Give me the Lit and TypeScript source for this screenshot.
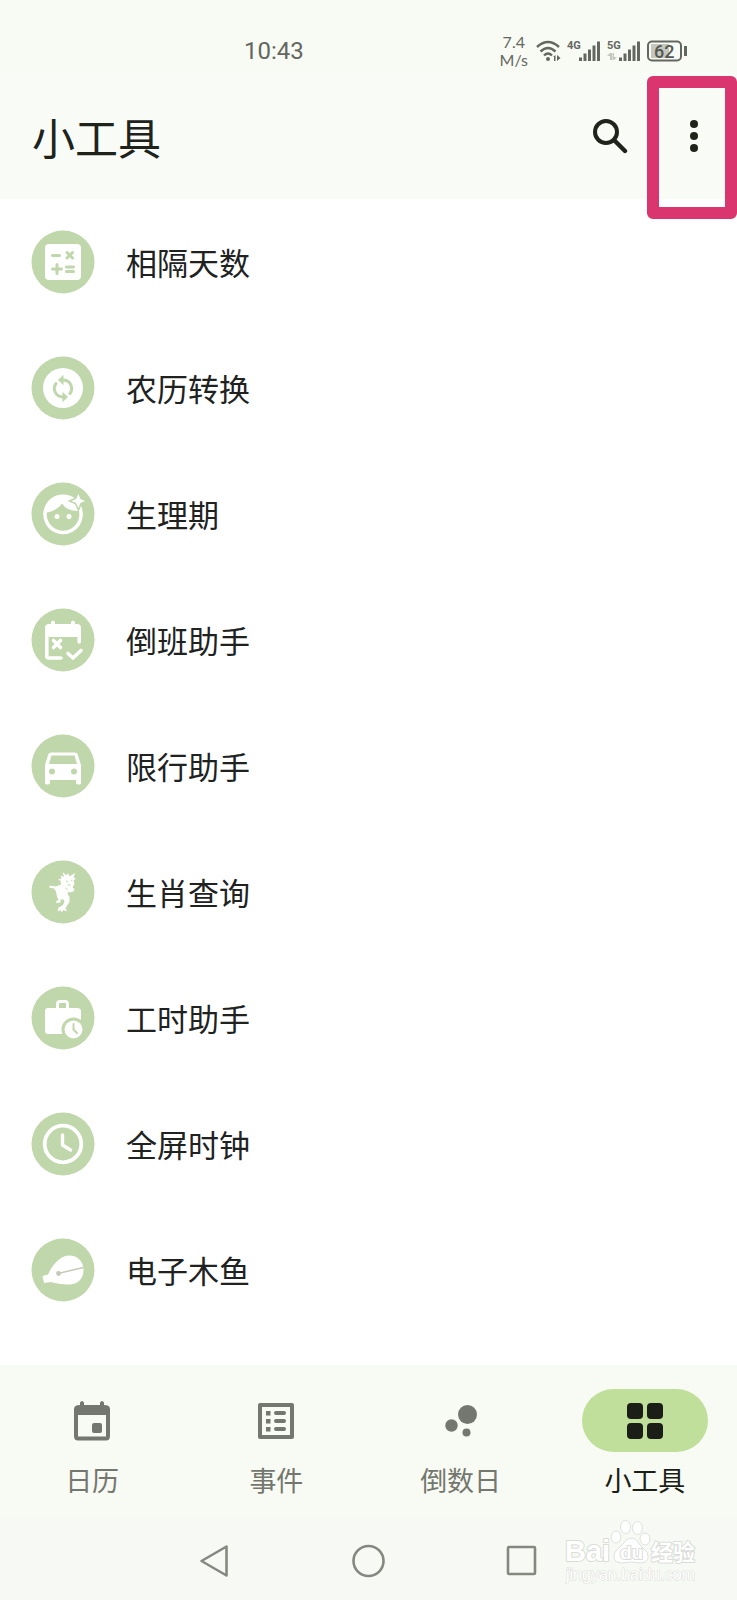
import { LitElement, html, svg, css } from "lit";
import { customElement, state } from "lit/decorators.js";

const tools = [
  {
    name: "相隔天数",
    art: svg`
      <rect x="14" y="14" width="36" height="36" rx="4" fill="#fff"/>
      <path class="cut" d="M21.500 25.500H28.500M21.500 39H30.500M26 34.500V43.500M36 22.500L41.500 28M41.500 22.500L36 28M35.500 37H42.500M35.500 41.500H42.500"/>`,
  },
  {
    name: "农历转换",
    art: svg`
      <circle cx="32" cy="32" r="20" fill="#fff"/>
      <path class="cut" d="M32 24A8.500 8.500 0 0 1 39 37.500M32 41A8.500 8.500 0 0 1 25 27.500"/>
      <path fill="#bfd7ab" d="M32.500 18.800L27 24L32.500 29.200ZM31.500 35.800L37 41L31.500 46.200Z"/>`,
  },
  {
    name: "生理期",
    art: svg`
      <path fill="none" stroke="#fff" stroke-width="3.500" d="M44.500 19.500A18 18 0 1 1 32 14.500"/>
      <path fill="#fff" d="M13 31C13 20 22 12.500 32 12.500C37 12.500 41 14 44 16.500L50 28L47 29C39 29 34 26 31 21.500C28 26 22 30 13 31Z"/>
      <path fill="#fff" stroke="#bfd7ab" stroke-width="1.600" d="M47.500 10L50 16.500L56 19L50 21.500L47.500 28L44.500 21.500L38.500 19L44.500 16.500Z"/>
      <circle cx="26" cy="34.500" r="2.500" fill="#fff"/><circle cx="38" cy="34.500" r="2.500" fill="#fff"/>`,
  },
  {
    name: "倒班助手",
    art: svg`
      <path fill="#fff" d="M14 29V19.500Q14 16 18 16H20V14Q22 11 24 14V16H40V14Q42 11 44 14V16H46Q50 16 50 19.500V29Z"/>
      <path fill="none" stroke="#fff" stroke-width="3.600" stroke-linecap="round" d="M15.800 26V48.500Q15.800 50 18 50H30M48.200 26V34"/>
      <path fill="none" stroke="#fff" stroke-width="3.600" stroke-linecap="round" stroke-linejoin="round" d="M22.500 32.500L29.500 39.500M29.500 32.500L22.500 39.500M37 45.500L42 50L50 42.500"/>`,
  },
  {
    name: "限行助手",
    art: svg`
      <path fill="#fff" fill-rule="evenodd" d="M20 18.500H44Q46 18.500 46.600 20L50 31V49Q50 50.500 48 50.500H47Q45 50.500 45 48.500V46H19V48.500Q19 50.500 17 50.500H16Q14 50.500 14 49V31L17.400 20Q18 18.500 20 18.500ZM20.500 21.500L18 30H46L43.500 21.500ZM21 34.500A3 3 0 1 0 21 40.500A3 3 0 1 0 21 34.500ZM43 34.500A3 3 0 1 0 43 40.500A3 3 0 1 0 43 34.500Z"/>`,
  },
  {
    name: "生肖查询",
    art: svg`
      <path fill="#fff" d="M31.500 12L35 15L37.500 13.500L38.500 16.500L44 13L42.500 17.500L45 18.500L42.500 20.500L43.500 23.500L41.500 28L43.500 28.500L42.500 31.500L39 32.500L37.500 31.500L36.500 33.500L38.500 37L38.500 42L35.500 46.500L34.500 48L36 51.500L32.500 50L30.500 52.500L29.500 50L26.500 51.500L27.500 47.500L31.500 45.500L33.500 42L32.500 39.500L29.500 39.500L29.500 42.500L25 43L25.500 41L27.500 39.500L26 37L25 31.500L23 28.500L18 27.500L19 25.500L24.500 26.500L30 24.500L29.500 20.500L26.500 20L30.500 18.500L29.500 15.500L33 17Z"/>
      <path fill="none" stroke="#bfd7ab" stroke-width="1" d="M35 21L37 22M40 20.500L41.500 20M36.500 25L39.500 25M34.500 28L36.500 29.500"/>`,
  },
  {
    name: "工时助手",
    art: svg`
      <path fill="#fff" fill-rule="evenodd" d="M25 22V18Q25 14 29 14H34Q38 14 38 18V22H46Q50 22 50 25V48H17Q14 48 14 45V25Q14 22 17 22ZM28 22H35V18Q35 17 34 17H29Q28 17 28 18Z"/>
      <circle cx="42.500" cy="43.500" r="12" fill="#bfd7ab"/>
      <circle cx="42.500" cy="43.500" r="9" fill="#fff"/>
      <path fill="none" stroke="#bfd7ab" stroke-width="2" stroke-linecap="round" d="M42.500 38V43.500L46 47"/>`,
  },
  {
    name: "全屏时钟",
    art: svg`
      <circle cx="32" cy="32" r="18.300" fill="none" stroke="#fff" stroke-width="3.800"/>
      <path fill="none" stroke="#fff" stroke-width="3.400" stroke-linecap="round" d="M31.500 23V33L39.500 38"/>`,
  },
  {
    name: "电子木鱼",
    art: svg`
      <path fill="#fff" d="M11.500 38L17 36.500C20 30 25 22 33 18.500C42 15.500 51 20 52.500 30C53 40 48 46 39 46.500C32 47 26 45.500 20 44L13 45Z"/>
      <path fill="none" stroke="#c3c9b7" stroke-width="1.400" d="M27 35.500L52.500 29.500"/>
      <circle cx="27.500" cy="35.500" r="2.400" fill="#c3c9b7"/>`,
  },
];

const tabs = [
  {
    name: "日历",
    art: svg`<path fill-rule="evenodd" d="M8 8V5.500Q10 2.500 12 5.500V8H28V5.500Q30 2.500 32 5.500V8Q38 8 38 12V39Q38 43.500 34 43.500H6Q2 43.500 2 39V12Q2 8 8 8ZM6 18V39.500H34V18ZM20 28Q20 26 22 26H28Q30 26 30 28V34Q30 36 28 36H22Q20 36 20 34Z"/>`,
  },
  {
    name: "事件",
    art: svg`<path fill="none" stroke="currentColor" stroke-width="4" stroke-linejoin="round" d="M4 8H36V40H4Z"/><path d="M10 14H14.500V18.500H10ZM10 22H14.500V26.500H10ZM10 30H14.500V34.500H10Z"/><path stroke="currentColor" stroke-width="4" stroke-linecap="round" d="M20 16H28M20 24H28M20 32H28"/>`,
  },
  {
    name: "倒数日",
    art: svg`<circle cx="26.500" cy="17.500" r="9.500"/><circle cx="10.500" cy="28.500" r="6.200"/><circle cx="25.500" cy="35.500" r="4"/>`,
  },
  {
    name: "小工具",
    art: svg`<rect x="2" y="6" width="16" height="16" rx="4"/><rect x="22" y="6" width="16" height="16" rx="4"/><rect x="2" y="26" width="16" height="16" rx="4"/><rect x="22" y="26" width="16" height="16" rx="4"/>`,
  },
];

@customElement("status-bar")
class StatusBar extends LitElement {
  static styles = css`
    :host { display: flex; height: 72px; box-sizing: border-box; padding: 30px 50px 0 244px; justify-content: space-between; align-items: center; background: #f8faf4; color: #646760; font-family: Roboto, "Liberation Sans", sans-serif; }
    .time { font-size: 24px; line-height: 30px; }
    .right { display: flex; align-items: center; gap: 6px; }
    .speed { margin-right: 2px; font: 16px/18px Lato, sans-serif; text-align: center; }
    svg { display: block; }
    .net { font: 700 11px Roboto, sans-serif; fill: #646760; }
    .level { font: 500 18px Roboto, sans-serif; fill: #555850; }
  `;
  signal(label: string, data: boolean) {
    return html`<svg width="34" height="22" viewBox="0 0 34 22">
      <text class="net" x="0" y="9">${label}</text>
      ${data ? svg`<path fill="#c3c5be" d="M3 13V20H5V13ZM0 16L3 13V16ZM7 13V20H5.500V13ZM7 20L10 17H7Z"/>` : ""}
      <path stroke="#646760" stroke-width="3" d="M13.500 17.500V21M18 13.500V21M22.500 9.500V21M27 5.500V21M31.500 1.500V21"/>
    </svg>`;
  }
  render() {
    return html`
      <span class="time">10:43</span>
      <div class="right">
        <span class="speed">7.4<br />M/s</span>
        <svg width="25" height="22" viewBox="0 0 25 22" fill="none" stroke="#646760" stroke-width="2.400">
          <path d="M1 7Q12 -3 23 7M4.500 11.500Q12 4.500 19.500 11.500M8 15.500Q12 11.500 16 15.500"/>
          <circle cx="12" cy="19" r="2" fill="#646760" stroke="none"/>
          <path fill="#646760" stroke="none" d="M17 17L19.500 15V21H18V17ZM21 15V21L24.500 18Z"/>
        </svg>
        ${this.signal("4G", false)} ${this.signal("5G", true)}
        <svg width="40" height="22" viewBox="0 0 40 22">
          <rect x="4" y="4" width="18" height="14" fill="#c4c7c0"/>
          <rect x="1" y="1.500" width="33" height="19" rx="4" fill="none" stroke="#646760" stroke-width="2"/>
          <rect x="37" y="6" width="3" height="10" fill="#646760"/>
          <text class="level" x="7" y="17.500">62</text>
        </svg>
      </div>`;
  }
}

@customElement("app-header")
class AppHeader extends LitElement {
  static styles = css`
    :host { display: flex; height: 127px; box-sizing: border-box; align-items: center; padding: 0 17px 0 32px; background: #f9fbf6; color: #20221c; }
    h1 { flex: 1; margin: 0; font-size: 43px; font-weight: 400; line-height: 60px; }
    button { border: 0; padding: 0; background: none; color: inherit; display: grid; place-items: center; width: 52px; height: 64px; }
    .actions { display: flex; gap: 32px; }
    svg { display: block; }
  `;
  render() {
    return html`
      <h1>小工具</h1>
      <div class="actions">
        <button aria-label="搜索">
          <svg width="36" height="36" viewBox="0 0 36 36" fill="none" stroke="currentColor" stroke-width="4">
            <circle cx="14" cy="14" r="11"/><path d="M23 23L33 33" stroke-linecap="round" stroke-width="4.400"/>
          </svg>
        </button>
        <button aria-label="更多">
          <svg width="10" height="32" viewBox="0 0 10 32" fill="currentColor">
            <circle cx="5" cy="4" r="4"/><circle cx="5" cy="16" r="4"/><circle cx="5" cy="28" r="4"/>
          </svg>
        </button>
      </div>`;
  }
}

@customElement("tool-list")
class ToolList extends LitElement {
  static styles = css`
    :host { display: block; padding-bottom: 32px; background: #fff; }
    ul { margin: 0; padding: 0; list-style: none; }
    button { display: flex; align-items: center; gap: 31px; width: 100%; height: 126px; padding: 0 31px; border: 0; background: none; font: inherit; font-size: 31px; line-height: 44px; color: #20221f; text-align: left; }
    svg { display: block; width: 64px; height: 64px; flex: none; }
    .cut { fill: none; stroke: #bfd7ab; stroke-width: 3; stroke-linecap: round; }
  `;
  render() {
    return html`<ul>
      ${tools.map(
        (t) => html`<li><button>
          <svg viewBox="0 0 64 64" aria-hidden="true"><circle cx="32" cy="32" r="31.500" fill="#bfd7ab"/>${t.art}</svg>
          <span>${t.name}</span>
        </button></li>`
      )}
    </ul>`;
  }
}

@customElement("tab-bar")
class TabBar extends LitElement {
  @state() selected = 3;
  static styles = css`
    :host { display: block; background: #f8fbf3; }
    nav { display: grid; grid-template-columns: repeat(4, 1fr); height: 153px; box-sizing: border-box; padding-top: 24px; }
    button { display: flex; flex-direction: column; align-items: center; gap: 8px; padding: 0; border: 0; background: none; color: #74776f; font: inherit; font-size: 27px; line-height: 40px; }
    .pill { display: grid; place-items: center; width: 126px; height: 63px; border-radius: 32px; }
    .on { color: #1b1d17; }
    .on .pill { background: #bfdf9b; }
    svg { display: block; fill: currentColor; }
  `;
  render() {
    return html`<nav>
      ${tabs.map(
        (t, i) => html`<button class=${i === this.selected ? "on" : ""} @click=${() => (this.selected = i)}>
          <span class="pill"><svg width="40" height="48" viewBox="0 0 40 48" aria-hidden="true">${t.art}</svg></span>
          <span>${t.name}</span>
        </button>`
      )}
    </nav>`;
  }
}

@customElement("system-nav")
class SystemNav extends LitElement {
  static styles = css`
    :host { display: flex; justify-content: center; align-items: center; height: 82px; box-sizing: border-box; padding-top: 4px; gap: 117px; background: #f7faf4; }
    button { display: block; padding: 0; border: 0; background: none; }
    svg { display: block; fill: none; stroke: #858881; stroke-width: 2.600; stroke-linejoin: round; }
  `;
  render() {
    return html`
      <button aria-label="返回"><svg width="36" height="36" viewBox="0 0 36 36"><path d="M3.500 18L28.500 3.500V32.500Z"/></svg></button>
      <button aria-label="主页"><svg width="36" height="36" viewBox="0 0 36 36"><circle cx="17.500" cy="18" r="15"/></svg></button>
      <button aria-label="最近"><svg width="36" height="36" viewBox="0 0 36 36"><rect x="4" y="4" width="27" height="27" rx="1"/></svg></button>`;
  }
}

@customElement("site-mark")
class SiteMark extends LitElement {
  static styles = css`
    :host { display: block; }
    svg { display: block; }
    text { fill: #fff; stroke: #dadcd8; stroke-width: 2px; paint-order: stroke; stroke-linejoin: round; }
    .big { font: 700 29px "Liberation Sans", sans-serif; }
    .cn { font: 700 22px "Noto Sans CJK SC", sans-serif; }
    .du { font: 700 19px "Liberation Sans", sans-serif; fill: #fff; }
    .url { font: 16px "Liberation Sans", sans-serif; stroke-width: 1px; }
    .paw { fill: #fff; stroke: #dfe1dd; stroke-width: 1; }
  `;
  render() {
    return html`<svg width="136" height="66" viewBox="0 0 136 66">
      <text class="big" x="0" y="42">Bai</text>
      <g class="paw">
        <ellipse cx="51" cy="18" rx="4.800" ry="6"/><ellipse cx="60.500" cy="8" rx="5" ry="6.500"/>
        <ellipse cx="72.500" cy="9" rx="5" ry="6.500"/><ellipse cx="80" cy="20" rx="5" ry="6"/>
        <path d="M66 19Q71 19 75 26L82 33Q86 43 76 44L66 43L56 44Q46 43 50 33L58 25Q61 19 66 19Z"/>
      </g>
      <text class="du" x="55" y="40">du</text>
      <text class="cn" x="86" y="41">经验</text>
      <text class="url" x="1" y="61">jingyan.baidu.com</text>
    </svg>`;
  }
}

@customElement("app-root")
class AppRoot extends LitElement {
  static styles = css`
    :host { display: flex; flex-direction: column; position: relative; min-height: 100vh; background: #fff; font-family: "Noto Sans CJK SC", sans-serif; }
    tool-list { flex: 1; }
    .marker { position: absolute; top: 76px; right: 0; width: 90px; height: 143px; box-sizing: border-box; border: 12px solid #db356f; border-radius: 6px; pointer-events: none; }
    .mark { position: absolute; right: 36px; bottom: 15px; pointer-events: none; }
  `;
  render() {
    return html`
      <status-bar></status-bar>
      <app-header></app-header>
      <tool-list></tool-list>
      <tab-bar></tab-bar>
      <system-nav></system-nav>
      <div class="marker"></div>
      <site-mark class="mark"></site-mark>`;
  }
}
